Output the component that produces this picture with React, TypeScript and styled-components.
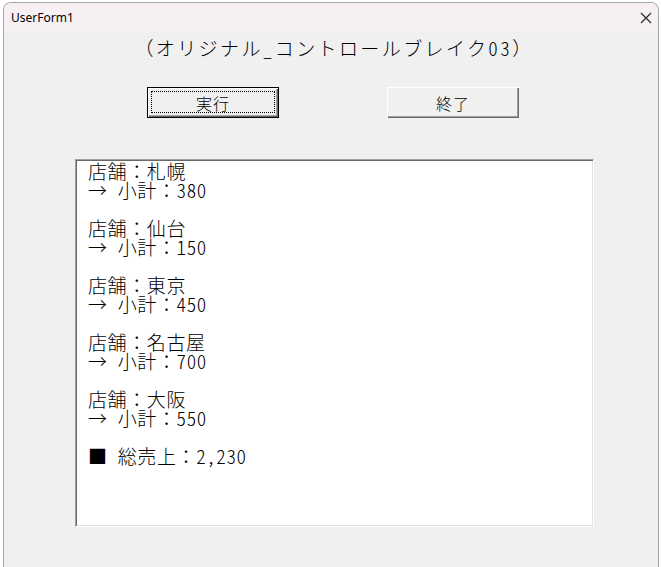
import React from "react"
import styled, {createGlobalStyle} from "styled-components"

const GlobalStyle = createGlobalStyle`
    html, body {
        margin: 0;
        padding: 0;
        background: #ffffff;
        overflow: hidden;
    }
`

const gothic = `"Noto Sans CJK JP", "Noto Sans", sans-serif`

const Window = styled.div`
    box-sizing: border-box;
    margin: 2px 2px 0 3px;
    height: 565px;
    border: 1px solid #a8a8a8;
    border-bottom: none;
    border-radius: 8px 8px 0 0;
    background: #f0f0f0;
    overflow: hidden;
    display: flex;
    flex-direction: column;
`

const TitleBar = styled.div`
    height: 29px;
    flex: 0 0 auto;
    display: flex;
    align-items: center;
    justify-content: space-between;
    padding: 0 6px 0 7px;
    background: #f6f0f4;
    font-family: "Noto Sans", "Liberation Sans", sans-serif;
    font-size: 12px;
    color: #000;
`

const CloseIcon = styled.svg`
    width: 12px;
    height: 12px;
    stroke: #222;
    stroke-width: 1.1;
`

const Body = styled.div`
    flex: 1 1 auto;
    display: flex;
    flex-direction: column;
`

const Heading = styled.div`
    margin-top: 5px;
    height: 22px;
    line-height: 22px;
    text-align: center;
    font-family: ${gothic};
    font-weight: 300;
    font-size: 19px;
    letter-spacing: 2.4px;
    color: #000;
    padding-left: 6px;
    white-space: nowrap;
`

const ButtonRow = styled.div`
    margin-top: 28px;
    display: flex;
    justify-content: center;
    gap: 108px;
    padding-left: 4px;
`

const Button = styled.div<{focused?: boolean}>(({focused}) => `
    box-sizing: border-box;
    width: 132px;
    height: 31px;
    display: flex;
    align-items: center;
    justify-content: center;
    position: relative;
    font-family: ${gothic};
    font-weight: 300;
    font-size: 16px;
    letter-spacing: 1px;
    color: #000;
    background: #f0f0f0;
    ${focused ? `
        border: 1px solid #000;
        box-shadow: inset 1px 1px 0 #fff, inset -1px -1px 0 #696969, inset -2px -2px 0 #a0a0a0;
    ` : `
        box-shadow: inset 1px 1px 0 #fff, inset -1px -1px 0 #696969, inset -2px -2px 0 #a0a0a0, inset 2px 2px 0 #f0f0f0;
    `}
`)

const FocusRing = styled.div`
    position: absolute;
    inset: 3px 3px 4px 3px;
    border: 1px dotted #000;
`

const ListBox = styled.div`
    box-sizing: border-box;
    margin: 41px 0 0 71px;
    width: 519px;
    height: 368px;
    background: #fff;
    border-top: 1px solid #a0a0a0;
    border-left: 1px solid #a0a0a0;
    border-right: 1px solid #fff;
    border-bottom: 1px solid #fff;
    box-shadow: inset 1px 1px 0 #696969, inset -1px -1px 0 #e3e3e3;
    padding: 1px 0 0 12px;
    font-family: ${gothic};
    font-weight: 300;
    font-size: 19px;
    line-height: 19px;
    letter-spacing: 0.6px;
    color: #000;
`

const Line = styled.div`
    height: 19px;
    white-space: pre;
`

// half-width run (digits, spaces, punctuation) in the gothic face's half-width forms
const Half = styled.span<{gap: number}>(({gap}) => `
    font-feature-settings: "hwid" 1;
    letter-spacing: ${gap}px;
`)

const renderText = (text: string, gap = 0.6) =>
    text.split(/([\x20-\x7e]+)/).filter(s => s !== "").map((part, i) =>
        /^[\x20-\x7e]+$/.test(part)
            ? <Half key={i} gap={gap}>{part}</Half>
            : <React.Fragment key={i}>{part}</React.Fragment>
    )

const lines = [
    "店舗：札幌",
    "→ 小計：380",
    "",
    "店舗：仙台",
    "→ 小計：150",
    "",
    "店舗：東京",
    "→ 小計：450",
    "",
    "店舗：名古屋",
    "→ 小計：700",
    "",
    "店舗：大阪",
    "→ 小計：550",
    "",
    "■ 総売上：2,230",
]

const App: React.FC = () => (
    <>
        <GlobalStyle />
        <Window>
            <TitleBar>
                <span>UserForm1</span>
                <CloseIcon viewBox="0 0 12 12">
                    <path d="M1 1 L11 11 M11 1 L1 11" />
                </CloseIcon>
            </TitleBar>
            <Body>
                <Heading>{renderText("（オリジナル_コントロールブレイク03）", 2.4)}</Heading>
                <ButtonRow>
                    <Button focused>
                        <FocusRing />
                        実行
                    </Button>
                    <Button>終了</Button>
                </ButtonRow>
                <ListBox>
                    {lines.map((l, i) => (
                        <Line key={i}>{renderText(l)}</Line>
                    ))}
                </ListBox>
            </Body>
        </Window>
    </>
)

export default App
